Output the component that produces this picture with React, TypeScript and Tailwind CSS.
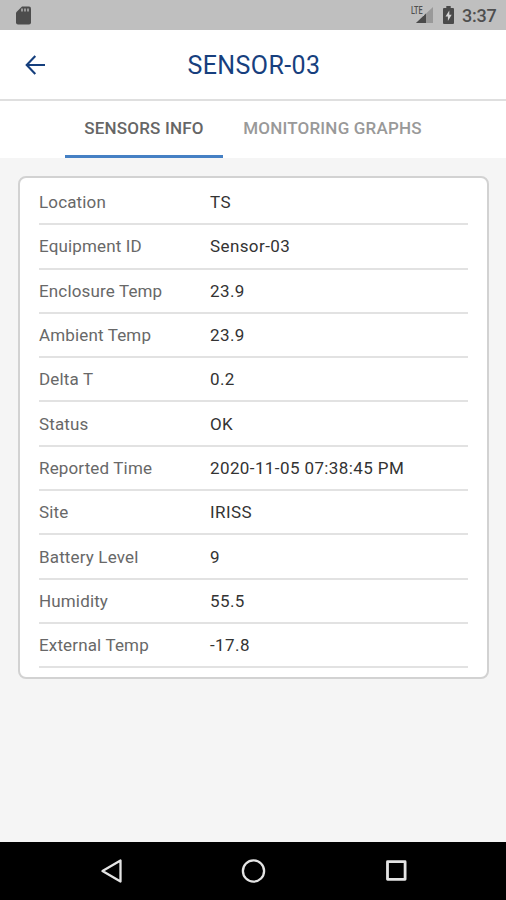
import { useState } from "react";

const sensorInfo = [
  { label: "Location", value: "TS" },
  { label: "Equipment ID", value: "Sensor-03" },
  { label: "Enclosure Temp", value: "23.9" },
  { label: "Ambient Temp", value: "23.9" },
  { label: "Delta T", value: "0.2" },
  { label: "Status", value: "OK" },
  { label: "Reported Time", value: "2020-11-05 07:38:45 PM" },
  { label: "Site", value: "IRISS" },
  { label: "Battery Level", value: "9" },
  { label: "Humidity", value: "55.5" },
  { label: "External Temp", value: "-17.8" },
];

const tabs = [
  { id: "info", label: "SENSORS INFO", width: "w-[158px]" },
  { id: "graphs", label: "MONITORING GRAPHS", width: "w-[219px]" },
];

function StatusBar() {
  return (
    <div className="h-[30px] shrink-0 bg-[#bfbfbf] flex items-center pl-4 pr-[9px] text-[#4f4f4f]">
      <svg width="15" height="19" viewBox="0 0 15 19" className="shrink-0">
        <path d="M6 0.5h7a2 2 0 0 1 2 2v14a2 2 0 0 1-2 2H2a2 2 0 0 1-2-2V6.5z" fill="#4d4d4d" />
        <path d="M6 2.5v3M9 2.5v3M12 2.5v3" stroke="#a3a3a3" strokeWidth="1.8" />
      </svg>
      <div className="ml-auto flex items-center">
        <div className="relative w-[23px] h-[18px]">
          <svg width="23" height="18" viewBox="0 0 23 18">
            <path d="M22 1v16H5z" fill="#999999" />
            <path d="M15 7.6V17H5z" fill="#4a4a4a" />
          </svg>
          <span className="absolute left-0 top-0 w-[13px] h-[10px] bg-[#bfbfbf]">
            <span className="absolute left-0 -top-px origin-left scale-x-[0.66] text-[11px] leading-3 font-medium">LTE</span>
          </span>
        </div>
        <svg width="11" height="18" viewBox="0 0 11 18" className="ml-[9px]">
          <path d="M3.3 0h4.4v2H10a1 1 0 0 1 1 1v14a1 1 0 0 1-1 1H1a1 1 0 0 1-1-1V3a1 1 0 0 1 1-1h2.3z" fill="#4a4a4a" />
          <path d="M6.3 4.5L2.5 10.5h2.400v4.5l3.800-6.200H6.3z" fill="#d4d4d4" />
        </svg>
        <span className="ml-2 w-[35px] pt-px text-[18px] leading-[29px] font-medium tracking-[-0.2px] whitespace-nowrap">3:37</span>
      </div>
    </div>
  );
}

function Header() {
  return (
    <header className="h-[71px] shrink-0 bg-white border-b-2 border-[#dfdfdf] grid grid-cols-[70px_1fr_70px] items-center">
      <button aria-label="Back" className="pl-[25px]">
        <svg width="21" height="20" viewBox="0 0 21 20" fill="none" stroke="#153f7d" strokeWidth="2.1">
          <path d="M10.3 1L1.7 10l8.6 9M1.5 10H20" />
        </svg>
      </button>
      <h1 className="pl-[2px] pt-[3px] text-center text-[25px] leading-8 text-[#173f7e] tracking-[0.4px]">SENSOR-03</h1>
    </header>
  );
}

function NavBar() {
  return (
    <nav className="h-[58px] shrink-0 bg-black flex items-center">
      <button aria-label="Back" className="ml-[100px]">
        <svg width="23" height="26" viewBox="0 0 23 26" fill="none" stroke="#e4e4e4" strokeWidth="2.3" strokeLinejoin="round">
          <path d="M20.5 2.5v21L2.500 13z" />
        </svg>
      </button>
      <button aria-label="Home" className="ml-[118px]">
        <svg width="26" height="26" viewBox="0 0 26 26" fill="none" stroke="#e4e4e4" strokeWidth="2.3">
          <circle cx="12.5" cy="13" r="10.6" />
        </svg>
      </button>
      <button aria-label="Recent apps" className="ml-[118px]">
        <svg width="24" height="24" viewBox="0 0 24 24" fill="none" stroke="#e4e4e4" strokeWidth="2.8" strokeLinejoin="round">
          <path d="M2.500 2.700h17.600v17.600H2.500z" />
        </svg>
      </button>
    </nav>
  );
}

export default function App() {
  const [activeTab, setActiveTab] = useState("info");

  return (
    <div className="w-full h-screen flex flex-col overflow-hidden bg-[#f5f5f5] font-['Roboto',sans-serif]">
      <StatusBar />
      <Header />

      <div className="h-[57px] shrink-0 bg-white flex pl-[65px]">
        {tabs.map((tab) => (
          <button
            key={tab.id}
            onClick={() => setActiveTab(tab.id)}
            className={`${tab.width} border-b-[3px] text-[17px] leading-6 font-medium tracking-[0.2px] whitespace-nowrap ${
              activeTab === tab.id ? "border-[#4580c4] text-[#666666]" : "border-transparent text-[#999999]"
            }`}
          >
            {tab.label}
          </button>
        ))}
      </div>

      <main className="flex-1 px-[18px] pt-[18px]">
        <div className="w-[471px] h-[503px] rounded-lg border-2 border-[#d2d2d2] bg-white px-[19px] pt-[3px]">
          {sensorInfo.map((row) => (
            <div
              key={row.label}
              className="h-[44.3px] flex items-center border-b-2 border-[#e2e2e2] text-[17px] leading-6"
            >
              <span className="w-[171px] shrink-0 text-[#686868] tracking-[0.15px]">{row.label}</span>
              <span className="text-[#333333] whitespace-nowrap tracking-[0.4px]">{row.value}</span>
            </div>
          ))}
        </div>
      </main>

      <NavBar />
    </div>
  );
}
